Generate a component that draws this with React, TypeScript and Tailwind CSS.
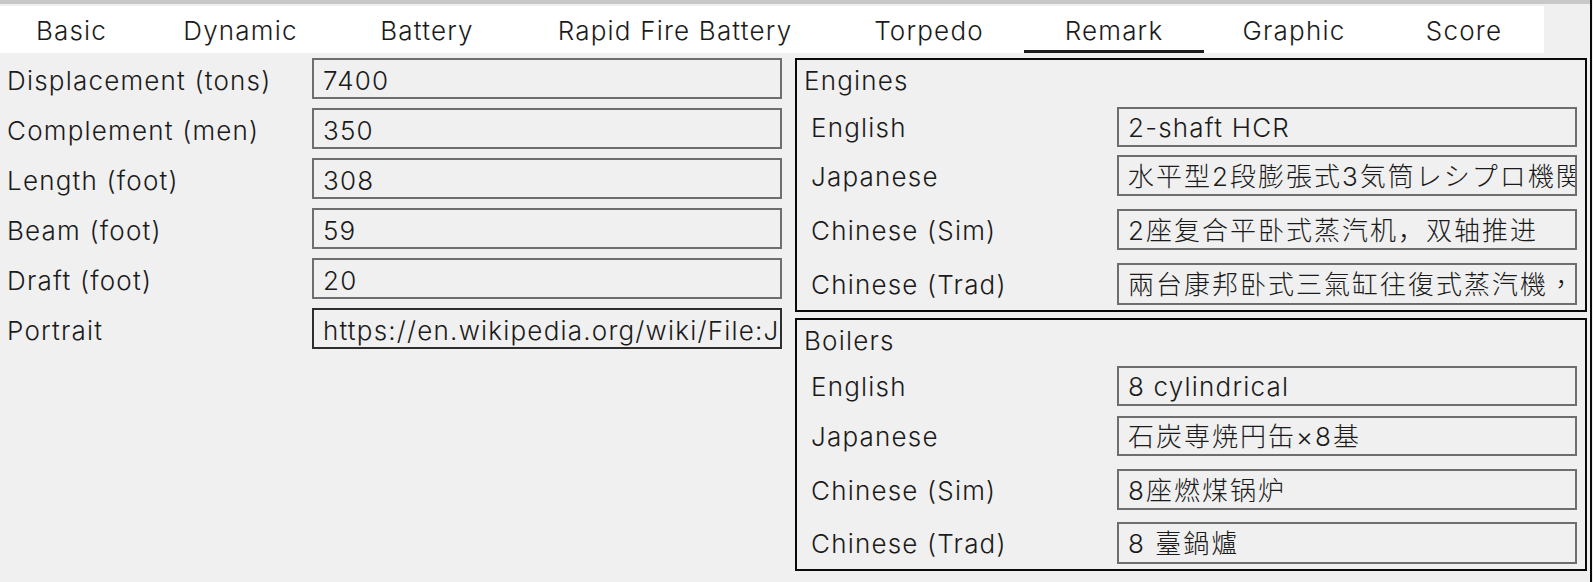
const tabs = [
  { label: "Basic", w: "w-[143px]" },
  { label: "Dynamic", w: "w-[195px]" },
  { label: "Battery", w: "w-[178px]" },
  { label: "Rapid Fire Battery", w: "w-[318px]" },
  { label: "Torpedo", w: "w-[190px]" },
  { label: "Remark", w: "w-[180px]", active: true },
  { label: "Graphic", w: "w-[180px]" },
  { label: "Score", w: "w-[160px]" },
];

const basicRows = [
  { label: "Displacement (tons)", value: "7400" },
  { label: "Complement (men)", value: "350" },
  { label: "Length (foot)", value: "308" },
  { label: "Beam (foot)", value: "59" },
  { label: "Draft (foot)", value: "20" },
  {
    label: "Portrait",
    value: "https://en.wikipedia.org/wiki/File:Japanese_cruiser_Chiyoda.jpg",
    dark: true,
  },
];

type LangRow = { label: string; value: string; cjk?: string; cls: string };

const engines: LangRow[] = [
  { label: "English", value: "2-shaft HCR", cls: "h-[40px]" },
  {
    label: "Japanese",
    value: "水平型2段膨張式3気筒レシプロ機関",
    cjk: "font-['Inter','Noto_Sans_CJK_JP',sans-serif] text-[26px] tracking-[2px]",
    cls: "mt-[8px] h-[41px]",
  },
  {
    label: "Chinese (Sim)",
    value: "2座复合平卧式蒸汽机，双轴推进",
    cjk: "font-['Inter','Noto_Sans_CJK_SC',sans-serif] text-[26px] tracking-[2px]",
    cls: "mt-[13px] h-[41px]",
  },
  {
    label: "Chinese (Trad)",
    value: "兩台康邦卧式三氣缸往復式蒸汽機，雙軸推進",
    cjk: "font-['Inter','Noto_Sans_CJK_TC',sans-serif] text-[26px] tracking-[2px]",
    cls: "mt-[13px] h-[42px]",
  },
];

const boilers: LangRow[] = [
  { label: "English", value: "8 cylindrical", cls: "h-[40px]" },
  {
    label: "Japanese",
    value: "石炭専焼円缶×8基",
    cjk: "font-['Inter','Noto_Sans_CJK_JP',sans-serif] text-[26px] tracking-[2px]",
    cls: "mt-[10px] h-[40px]",
  },
  {
    label: "Chinese (Sim)",
    value: "8座燃煤锅炉",
    cjk: "font-['Inter','Noto_Sans_CJK_SC',sans-serif] text-[26px] tracking-[2px]",
    cls: "mt-[13px] h-[41px]",
  },
  {
    label: "Chinese (Trad)",
    value: "8 臺鍋爐",
    cjk: "font-['Inter','Noto_Sans_CJK_TC',sans-serif] text-[26px] tracking-[2px]",
    cls: "mt-[12px] h-[42px]",
  },
];

function GroupBox({
  title,
  rows,
  headerCls,
  boxCls,
}: {
  title: string;
  rows: LangRow[];
  headerCls: string;
  boxCls: string;
}) {
  return (
    <div className={`border-2 border-[#0a0a0a] flex flex-col ${boxCls}`}>
      <div className={`pl-[7px] pt-[6px] leading-[30px] ${headerCls}`}>{title}</div>
      {rows.map((r) => (
        <div key={r.label} className={`flex items-center ${r.cls}`}>
          <div className="w-[320px] pl-[14px] pt-[1px] whitespace-nowrap">{r.label}</div>
          <div className="w-[460px] h-full border-2 border-[#6e6e6e] flex items-center pl-[9px] pt-[1px] overflow-hidden whitespace-nowrap">
            <span className={r.cjk}>{r.value}</span>
          </div>
        </div>
      ))}
    </div>
  );
}

export default function App() {
  return (
    <div className="w-[1593px] h-[582px] flex bg-[#f0f0f0] text-[#1b1b1b] font-['Inter','Noto_Sans_CJK_JP',sans-serif] text-[26px] font-light tracking-[1.2px] overflow-hidden">
      <div className="w-[1590px] flex flex-col">
        <div className="h-[4px] bg-[#c8c8c8]" />
        <div className="h-[2px]" />
        <div className="flex w-[1544px] h-[47px] bg-white">
          {tabs.map((t) => (
            <div key={t.label} className={`${t.w} flex flex-col`}>
              <div className="flex-1 flex items-center justify-center whitespace-nowrap pt-[5px]">
                {t.label}
              </div>
              <div className={t.active ? "h-[3px] bg-[#1c1c1c]" : "h-[3px]"} />
            </div>
          ))}
        </div>

        <div className="flex mt-[5px]">
          <div className="w-[782px] flex flex-col gap-[9px]">
            {basicRows.map((r) => (
              <div key={r.label} className="flex items-center h-[41px]">
                <div className="w-[312px] pl-[7px] pt-[3px] whitespace-nowrap">{r.label}</div>
                <div
                  className={`w-[470px] h-full border-2 ${
                    r.dark ? "border-[#2e2e2e]" : "border-[#6e6e6e]"
                  } flex items-center pl-[9px] pt-[3px] overflow-hidden whitespace-nowrap`}
                >
                  {r.value}
                </div>
              </div>
            ))}
          </div>

          <div className="ml-[13px] w-[792px] flex flex-col gap-[6px]">
            <GroupBox
              title="Engines"
              rows={engines}
              headerCls="h-[47px]"
              boxCls="h-[254px]"
            />
            <GroupBox
              title="Boilers"
              rows={boilers}
              headerCls="h-[46px]"
              boxCls="h-[253px]"
            />
          </div>
        </div>
      </div>
      <div className="w-[2px] bg-[#0a0a0a]" />
    </div>
  );
}
